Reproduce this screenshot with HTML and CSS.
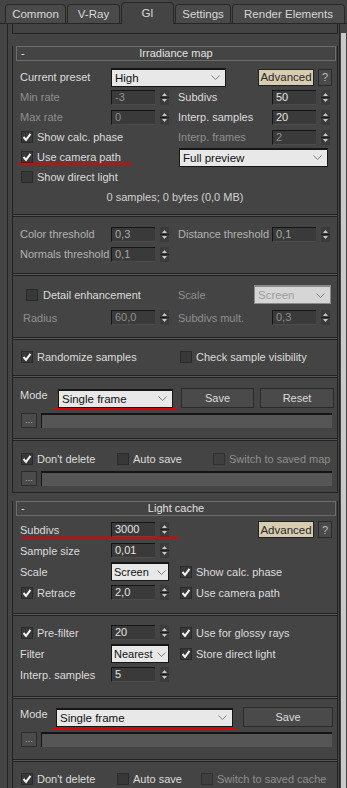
FILE: index.html
```html
<!DOCTYPE html>
<html lang="en">
<head>
    <meta charset="UTF-8">
    <meta name="viewport" content="width=device-width, initial-scale=1.0">
    <title>V-Ray GI</title>
    <link rel="stylesheet" href="styles.css">
</head>
<body>

    <div class="tabs">
        <div class="tab t-common">Common</div>
        <div class="tab t-vray">V-Ray</div>
        <div class="tab t-gi active">GI</div>
        <div class="tab t-settings">Settings</div>
        <div class="tab t-render">Render Elements</div>
    </div>

    <div class="main">
        <div class="panel">
            <div class="prev"></div>

            <!-- Irradiance map -->
            <div class="rollout">
                <div class="rollout-head"><span class="minus">-</span>Irradiance map</div>

                <div class="section ir1">
                    <div class="row">
                        <span class="lbl">Current preset</span>
                        <div class="select w115"><span>High</span><svg class="chev" width="9" height="5" viewBox="0 0 9 5"><path d="M0.5 0.5 L4.5 4.5 L8.5 0.5"/></svg></div>
                        <button class="btn adv adv-ir">Advanced</button>
                        <button class="btn help">?</button>
                    </div>
                    <div class="row">
                        <span class="lbl dim">Min rate</span>
                        <div class="spin"><div class="field dim">-3</div><svg class="arrows" viewBox="0 0 9 15"><rect width="9" height="15"/><path class="tri" d="M4.5 3 L7 6 L2 6 Z M4.5 12 L7 9 L2 9 Z"/><path class="mid" d="M0 7.5 H9"/></svg></div>
                        <span class="lbl2">Subdivs</span>
                        <div class="spin"><div class="field">50</div><svg class="arrows" viewBox="0 0 9 15"><rect width="9" height="15"/><path class="tri" d="M4.5 3 L7 6 L2 6 Z M4.5 12 L7 9 L2 9 Z"/><path class="mid" d="M0 7.5 H9"/></svg></div>
                    </div>
                    <div class="row">
                        <span class="lbl dim">Max rate</span>
                        <div class="spin"><div class="field dim">0</div><svg class="arrows" viewBox="0 0 9 15"><rect width="9" height="15"/><path class="tri" d="M4.5 3 L7 6 L2 6 Z M4.5 12 L7 9 L2 9 Z"/><path class="mid" d="M0 7.5 H9"/></svg></div>
                        <span class="lbl2">Interp. samples</span>
                        <div class="spin"><div class="field">20</div><svg class="arrows" viewBox="0 0 9 15"><rect width="9" height="15"/><path class="tri" d="M4.5 3 L7 6 L2 6 Z M4.5 12 L7 9 L2 9 Z"/><path class="mid" d="M0 7.5 H9"/></svg></div>
                    </div>
                    <div class="row">
                        <label class="check w158"><span class="box"><svg viewBox="0 0 10 10"><path d="M1.5 5 L4 7.8 L8.5 1.8"/></svg></span>Show calc. phase</label>
                        <span class="lbl2 dim">Interp. frames</span>
                        <div class="spin"><div class="field dim">2</div><svg class="arrows" viewBox="0 0 9 15"><rect width="9" height="15"/><path class="tri" d="M4.5 3 L7 6 L2 6 Z M4.5 12 L7 9 L2 9 Z"/><path class="mid" d="M0 7.5 H9"/></svg></div>
                    </div>
                    <div class="row">
                        <label class="check w159"><span class="box"><svg viewBox="0 0 10 10"><path d="M1.5 5 L4 7.8 L8.5 1.8"/></svg></span>Use camera path</label>
                        <div class="select w149"><span>Full preview</span><svg class="chev" width="9" height="5" viewBox="0 0 9 5"><path d="M0.5 0.5 L4.5 4.5 L8.5 0.5"/></svg></div>
                        <span class="mark mark-cam"></span>
                    </div>
                    <div class="row">
                        <label class="check"><span class="box"></span>Show direct light</label>
                    </div>
                    <div class="row info">0 samples; 0 bytes (0,0 MB)</div>
                </div>
                <div class="sep"></div>

                <div class="section ir2">
                    <div class="row">
                        <span class="lbl soft">Color threshold</span>
                        <div class="spin"><div class="field soft">0,3</div><svg class="arrows" viewBox="0 0 9 15"><rect width="9" height="15"/><path class="tri" d="M4.5 3 L7 6 L2 6 Z M4.5 12 L7 9 L2 9 Z"/><path class="mid" d="M0 7.5 H9"/></svg></div>
                        <span class="lbl2 soft">Distance threshold</span>
                        <div class="spin"><div class="field soft">0,1</div><svg class="arrows" viewBox="0 0 9 15"><rect width="9" height="15"/><path class="tri" d="M4.5 3 L7 6 L2 6 Z M4.5 12 L7 9 L2 9 Z"/><path class="mid" d="M0 7.5 H9"/></svg></div>
                    </div>
                    <div class="row">
                        <span class="lbl soft">Normals threshold</span>
                        <div class="spin"><div class="field soft">0,1</div><svg class="arrows" viewBox="0 0 9 15"><rect width="9" height="15"/><path class="tri" d="M4.5 3 L7 6 L2 6 Z M4.5 12 L7 9 L2 9 Z"/><path class="mid" d="M0 7.5 H9"/></svg></div>
                    </div>
                </div>
                <div class="sep"></div>

                <div class="section ir3">
                    <div class="row tall">
                        <label class="check w158 indent"><span class="box"></span>Detail enhancement</label>
                        <span class="lbl-scale dim">Scale</span>
                        <div class="select w77 disabled"><span>Screen</span><svg class="chev" width="9" height="5" viewBox="0 0 9 5"><path d="M0.5 0.5 L4.5 4.5 L8.5 0.5"/></svg></div>
                    </div>
                    <div class="row tall">
                        <span class="lbl dim indent">Radius</span>
                        <div class="spin"><div class="field dim">60,0</div><svg class="arrows" viewBox="0 0 9 15"><rect width="9" height="15"/><path class="tri" d="M4.5 3 L7 6 L2 6 Z M4.5 12 L7 9 L2 9 Z"/><path class="mid" d="M0 7.5 H9"/></svg></div>
                        <span class="lbl2 dim">Subdivs mult.</span>
                        <div class="spin"><div class="field dim">0,3</div><svg class="arrows" viewBox="0 0 9 15"><rect width="9" height="15"/><path class="tri" d="M4.5 3 L7 6 L2 6 Z M4.5 12 L7 9 L2 9 Z"/><path class="mid" d="M0 7.5 H9"/></svg></div>
                    </div>
                </div>
                <div class="sep"></div>

                <div class="section ir4">
                    <div class="row">
                        <label class="check w158"><span class="box"><svg viewBox="0 0 10 10"><path d="M1.5 5 L4 7.8 L8.5 1.8"/></svg></span>Randomize samples</label>
                        <label class="check push1"><span class="box"></span>Check sample visibility</label>
                    </div>
                </div>
                <div class="sep"></div>

                <div class="section ir5">
                    <div class="row">
                        <span class="lbl-mode">Mode</span>
                        <div class="select w115"><span>Single frame</span><svg class="chev" width="9" height="5" viewBox="0 0 9 5"><path d="M0.5 0.5 L4.5 4.5 L8.5 0.5"/></svg></div>
                        <button class="btn save-ir">Save</button>
                        <button class="btn reset">Reset</button>
                        <span class="mark mark-mode1"></span>
                    </div>
                    <div class="row file">
                        <button class="dots">...</button>
                        <div class="path"></div>
                    </div>
                </div>
                <div class="sep"></div>

                <div class="section ir6">
                    <div class="row">
                        <label class="check w96"><span class="box"><svg viewBox="0 0 10 10"><path d="M1.5 5 L4 7.8 L8.5 1.8"/></svg></span>Don't delete</label>
                        <label class="check w96"><span class="box"></span>Auto save</label>
                        <label class="check dim"><span class="box off"></span>Switch to saved map</label>
                    </div>
                    <div class="row file near">
                        <button class="dots">...</button>
                        <div class="path"></div>
                    </div>
                </div>
            </div>

            <!-- Light cache -->
            <div class="rollout lc">
                <div class="rollout-head"><span class="minus">-</span>Light cache</div>

                <div class="section lc1">
                    <div class="row mid-row">
                        <span class="lbl">Subdivs</span>
                        <div class="spin"><div class="field">3000</div><svg class="arrows" viewBox="0 0 9 15"><rect width="9" height="15"/><path class="tri" d="M4.5 3 L7 6 L2 6 Z M4.5 12 L7 9 L2 9 Z"/><path class="mid" d="M0 7.5 H9"/></svg></div>
                        <button class="btn adv adv-lc">Advanced</button>
                        <button class="btn help">?</button>
                        <span class="mark mark-sub"></span>
                    </div>
                    <div class="row mid-row">
                        <span class="lbl">Sample size</span>
                        <div class="spin"><div class="field">0,01</div><svg class="arrows" viewBox="0 0 9 15"><rect width="9" height="15"/><path class="tri" d="M4.5 3 L7 6 L2 6 Z M4.5 12 L7 9 L2 9 Z"/><path class="mid" d="M0 7.5 H9"/></svg></div>
                    </div>
                    <div class="row mid-row">
                        <span class="lbl">Scale</span>
                        <div class="select w58"><span>Screen</span><svg class="chev" width="9" height="5" viewBox="0 0 9 5"><path d="M0.5 0.5 L4.5 4.5 L8.5 0.5"/></svg></div>
                        <label class="check push10"><span class="box"><svg viewBox="0 0 10 10"><path d="M1.5 5 L4 7.8 L8.5 1.8"/></svg></span>Show calc. phase</label>
                    </div>
                    <div class="row mid-row">
                        <label class="check w91"><span class="box"><svg viewBox="0 0 10 10"><path d="M1.5 5 L4 7.8 L8.5 1.8"/></svg></span>Retrace</label>
                        <div class="spin"><div class="field">2,0</div><svg class="arrows" viewBox="0 0 9 15"><rect width="9" height="15"/><path class="tri" d="M4.5 3 L7 6 L2 6 Z M4.5 12 L7 9 L2 9 Z"/><path class="mid" d="M0 7.5 H9"/></svg></div>
                        <label class="check push1"><span class="box"><svg viewBox="0 0 10 10"><path d="M1.5 5 L4 7.8 L8.5 1.8"/></svg></span>Use camera path</label>
                    </div>
                </div>
                <div class="sep"></div>

                <div class="section lc2">
                    <div class="row mid-row">
                        <label class="check w91"><span class="box"><svg viewBox="0 0 10 10"><path d="M1.5 5 L4 7.8 L8.5 1.8"/></svg></span>Pre-filter</label>
                        <div class="spin"><div class="field">20</div><svg class="arrows" viewBox="0 0 9 15"><rect width="9" height="15"/><path class="tri" d="M4.5 3 L7 6 L2 6 Z M4.5 12 L7 9 L2 9 Z"/><path class="mid" d="M0 7.5 H9"/></svg></div>
                        <label class="check push1"><span class="box"><svg viewBox="0 0 10 10"><path d="M1.5 5 L4 7.8 L8.5 1.8"/></svg></span>Use for glossy rays</label>
                    </div>
                    <div class="row mid-row">
                        <span class="lbl">Filter</span>
                        <div class="select w58"><span>Nearest</span><svg class="chev" width="9" height="5" viewBox="0 0 9 5"><path d="M0.5 0.5 L4.5 4.5 L8.5 0.5"/></svg></div>
                        <label class="check push10"><span class="box"><svg viewBox="0 0 10 10"><path d="M1.5 5 L4 7.8 L8.5 1.8"/></svg></span>Store direct light</label>
                    </div>
                    <div class="row mid-row">
                        <span class="lbl">Interp. samples</span>
                        <div class="spin"><div class="field">5</div><svg class="arrows" viewBox="0 0 9 15"><rect width="9" height="15"/><path class="tri" d="M4.5 3 L7 6 L2 6 Z M4.5 12 L7 9 L2 9 Z"/><path class="mid" d="M0 7.5 H9"/></svg></div>
                    </div>
                </div>
                <div class="sep"></div>

                <div class="section lc3">
                    <div class="row">
                        <span class="lbl-mode lc-mode">Mode</span>
                        <div class="select w177"><span>Single frame</span><svg class="chev" width="9" height="5" viewBox="0 0 9 5"><path d="M0.5 0.5 L4.5 4.5 L8.5 0.5"/></svg></div>
                        <button class="btn save-lc">Save</button>
                        <span class="mark mark-mode2"></span>
                    </div>
                    <div class="row file">
                        <button class="dots">...</button>
                        <div class="path"></div>
                    </div>
                </div>
                <div class="sep"></div>

                <div class="section lc4">
                    <div class="row">
                        <label class="check w96"><span class="box"><svg viewBox="0 0 10 10"><path d="M1.5 5 L4 7.8 L8.5 1.8"/></svg></span>Don't delete</label>
                        <label class="check w84"><span class="box"></span>Auto save</label>
                        <label class="check dim"><span class="box off"></span>Switch to saved cache</label>
                    </div>
                </div>
            </div>
        </div>
        <div class="scroll"></div>
    </div>

</body>
</html>
```

FILE: styles.css
```css
body {
    margin: 0;
    width: 347px;
    height: 788px;
    overflow: hidden;
    background: #444444;
    font-family: 'Liberation Sans', Arial, sans-serif;
    font-size: 11px;
    color: #dcdcdc;
}

/* tabs */
.tabs {
    display: flex;
    align-items: flex-end;
    gap: 1px;
    height: 24px;
    padding-left: 5px;
    box-sizing: border-box;
    border-bottom: 1px solid #262626;
}

.tab {
    height: 19px;
    box-sizing: border-box;
    border: 1px solid #282828;
    border-bottom: none;
    border-radius: 4px 4px 0 0;
    background: #4a4a4a;
    color: #d8d8d8;
    font-size: 11.5px;
    line-height: 18px;
    text-align: center;
}

.tab.active {
    height: 22px;
    margin-bottom: -1px;
    background: #444444;
    line-height: 21px;
}

.t-common { width: 61px; }
.t-vray { width: 53px; }
.t-gi { width: 53px; }
.t-settings { width: 56px; }
.t-render { width: 113px; }

/* panel frame */
.main {
    display: flex;
}

.panel {
    width: 333px;
    height: 764px;
    margin-left: 7px;
    box-sizing: border-box;
    border-left: 1px solid #232323;
    border-right: 1px solid #232323;
}

.scroll {
    width: 5px;
    height: 760px;
    margin-left: 1px;
    margin-top: 9px;
    background: #c9c9c9;
}

.prev {
    width: 326px;
    height: 10px;
    margin-left: 4px;
    box-sizing: border-box;
    border: 1px solid #222;
    border-top: none;
}

.rollout {
    width: 326px;
    margin: 12px 0 0 4px;
    box-sizing: border-box;
    border: 1px solid #222;
    border-top: none;
}

.rollout.lc {
    margin-top: 8px;
}

.rollout-head {
    position: relative;
    height: 15px;
    margin: 0 1px 0 3px;
    box-sizing: border-box;
    border: 1px solid #6c6c6c;
    line-height: 13px;
    text-align: center;
    color: #e2e2e2;
}

.minus {
    position: absolute;
    left: 4px;
    top: 0;
}

.sep {
    height: 1px;
    background: #565656;
    border-top: 1px solid #222;
    border-bottom: 1px solid #222;
}

.section {
    padding-left: 7px;
}

.ir1 { padding-top: 6px; padding-bottom: 7px; }
.ir2 { padding-top: 7px; padding-bottom: 9px; }
.ir3 { padding-top: 7px; padding-bottom: 8px; }
.ir4 { padding-top: 7px; padding-bottom: 8px; }
.ir5 { padding-top: 10px; padding-bottom: 10px; }
.ir6 { padding-top: 8px; padding-bottom: 6px; }
.lc1 { padding-top: 3px; padding-bottom: 10px; }
.lc2 { padding-top: 6px; padding-bottom: 11px; }
.lc3 { padding-top: 8px; padding-bottom: 12px; }
.lc4 { padding-top: 7px; }

/* rows */
.row {
    position: relative;
    display: flex;
    align-items: center;
    height: 20px;
    white-space: nowrap;
}

.row.tall { height: 23px; }
.row.mid-row { height: 21px; }

.row.file {
    height: 15px;
    margin-top: 5px;
}

.row.file.near { margin-top: 2px; }

.row.info {
    justify-content: center;
    padding-right: 7px;
    color: #d0d0d0;
}

.lbl {
    flex: none;
    width: 91px;
}

.lbl2 {
    flex: none;
    width: 94px;
}

.lbl-scale {
    flex: none;
    width: 76px;
}

.lbl-mode {
    flex: none;
    width: 38px;
    align-self: flex-start;
    line-height: 15px;
}

.lbl-mode.lc-mode { width: 36px; }

.indent { padding-left: 3px; box-sizing: border-box; }

.dim { color: #8f8f8f; }
.soft { color: #b2b2b2; }

/* spinner */
.spin {
    flex: none;
    display: flex;
    align-items: center;
    width: 67px;
}

.field {
    width: 44px;
    height: 15px;
    box-sizing: border-box;
    padding-left: 3px;
    background: #3a3a3a;
    border-top: 1px solid #151515;
    border-left: 1px solid #151515;
    border-bottom: 1px solid #4c4c4c;
    line-height: 13px;
    color: #e4e4e4;
}

.field.dim { color: #8f8f8f; }
.field.soft { color: #a8a8a8; }

.arrows {
    width: 9px;
    height: 15px;
    margin-left: 5px;
}

.arrows rect { fill: #3b3b3b; }
.arrows .tri { fill: #c8c8c8; }
.arrows .mid { stroke: #1e1e1e; stroke-width: 1; }

/* dropdown */
.select {
    flex: none;
    display: flex;
    align-items: center;
    justify-content: space-between;
    height: 19px;
    box-sizing: border-box;
    padding: 0 5px 0 3px;
    background: #e8e8e8;
    border: 1px solid #161616;
    border-top-width: 2px;
    color: #111;
    font-size: 11.5px;
}

.select.disabled {
    background: #d6d6d6;
    border-color: #8a8a8a;
    color: #9c9c9c;
}

.chev {
    flex: none;
}

.chev path {
    fill: none;
    stroke: #808080;
    stroke-width: 1;
}

.w58 {
    width: 58px;
    padding: 0 2px 0 2px;
    font-size: 11px;
}

.w77 { width: 77px; }
.w115 { width: 115px; }
.w149 { width: 149px; }
.w177 { width: 177px; }

/* buttons */
.btn {
    flex: none;
    height: 20px;
    padding: 0;
    font: inherit;
    color: #dcdcdc;
    background: #4a4a4a;
    border: 1px solid #2a2a2a;
    box-sizing: border-box;
}

.adv {
    width: 56px;
    height: 17px;
    background: #d8ccb0;
    border: 1px solid #222;
    color: #2a2a2a;
    font-size: 11.5px;
}

.adv-ir { margin-left: 32px; }
.adv-lc { margin-left: 80px; }

.help {
    width: 14px;
    height: 17px;
    margin-left: 4px;
    color: #bdbdbd;
}

.save-ir { width: 73px; margin-left: 8px; }
.reset { width: 74px; margin-left: 6px; }
.save-lc { width: 90px; margin-left: 10px; }

.dots {
    flex: none;
    width: 16px;
    height: 15px;
    margin-left: 1px;
    margin-right: 4px;
    padding: 0;
    box-sizing: border-box;
    background: #4b4b4b;
    border: 1px solid #2c2c2c;
    color: #b8b8b8;
    font: 9px 'Liberation Sans', Arial, sans-serif;
    line-height: 9px;
}

.path {
    width: 291px;
    height: 15px;
    box-sizing: border-box;
    background: #565656;
    border-top: 2px solid #141414;
    border-left: 1px solid #141414;
}

/* checkboxes */
.check {
    flex: none;
    display: flex;
    align-items: center;
}

.box {
    display: flex;
    align-items: center;
    justify-content: center;
    width: 12px;
    height: 12px;
    margin-left: 1px;
    margin-right: 4px;
    box-sizing: border-box;
    background: #383838;
    border: 1px solid #2a2a2a;
}

.box.off {
    background: #3f3f3f;
    border-color: #303030;
}

.box svg {
    width: 10px;
    height: 10px;
}

.box path {
    fill: none;
    stroke: #f2f2f2;
    stroke-width: 2;
}

.indent .box { margin-left: 3px; margin-right: 5px; }

.w84 { width: 84px; }
.w91 { width: 91px; }
.w96 { width: 96px; }
.w158 { width: 158px; }
.w159 { width: 159px; }

.push1 { margin-left: 1px; }
.push10 { margin-left: 10px; }

/* red annotation lines */
.mark {
    position: absolute;
    height: 2px;
    background: #e10000;
}

.mark-cam { left: -2px; top: 16px; width: 113px; }
.mark-mode1 { left: 34px; top: 20px; width: 123px; }
.mark-sub { left: 1px; top: 18px; width: 157px; }
.mark-mode2 { left: 32px; top: 21px; width: 184px; }
```
